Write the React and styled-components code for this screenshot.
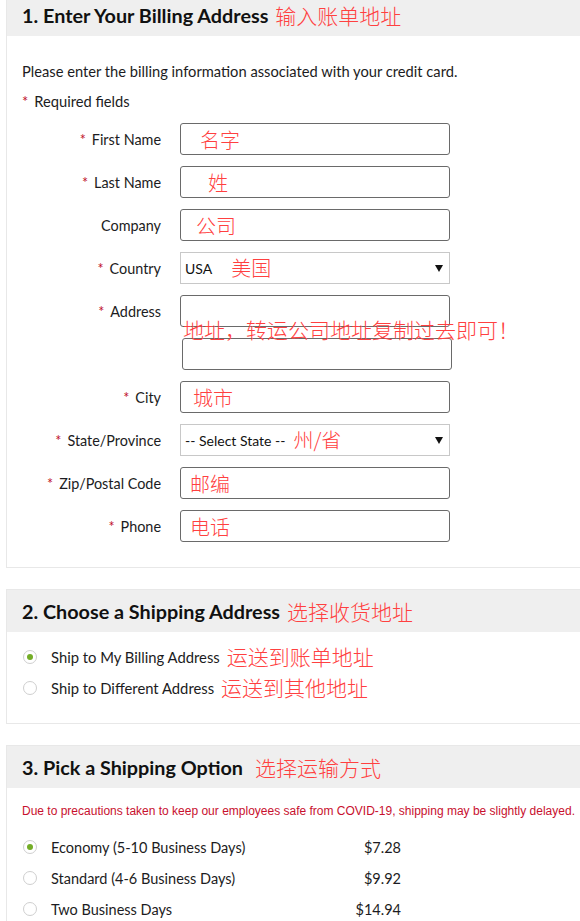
import React from 'react';
import styled, { createGlobalStyle } from 'styled-components';

const GlobalStyle = createGlobalStyle`
  html, body {
    margin: 0;
    background: #fff;
    overflow: hidden;
  }
  body {
    font-family: Lato, "Noto Sans", sans-serif;
    color: #1c1c22;
  }
`;

const Page = styled.div`
  padding-left: 6px;
  width: 600px;
`;

const Section = styled.section`
  border: 1px solid #e8e8e8;
  margin-top: ${(p) => (p.$first ? '-7px' : '0')};
  margin-bottom: 21px;
`;

const SectionHeader = styled.div`
  height: 42px;
  background: #efefef;
  display: flex;
  align-items: center;
  padding-left: 15px;
  gap: ${(p) => p.$gap || 7}px;
`;

const Title = styled.h2`
  margin: 0;
  font-size: 19.8px;
  font-weight: 700;
  color: #111;
`;

// 빨간 중국어 메모
const Note = styled.span`
  font-family: "Noto Sans CJK SC", sans-serif;
  font-size: ${(p) => p.$size || 21}px;
  font-weight: 300;
  color: #ff4040;
  margin-left: ${(p) => p.$left || 0}px;
  white-space: nowrap;
  line-height: 1;
`;

const Body = styled.div`
  padding: ${(p) => p.$pad};
`;

const Intro = styled.p`
  margin: 0 0 10px;
  font-size: 14.7px;
  line-height: 20px;
`;

const Required = styled.p`
  margin: 0 0 12px;
  font-size: 14.7px;
  line-height: 20px;
`;

const Star = styled.span`
  color: #c0102a;
  margin-right: 6px;
`;

const Form = styled.div`
  display: grid;
  grid-template-columns: 139px 270px;
  column-gap: 19px;
  row-gap: 11px;
`;

const Label = styled.label`
  height: 32px;
  display: flex;
  align-items: center;
  justify-content: flex-end;
  font-size: 14.4px;
`;

const FieldCell = styled.div`
  position: relative;
  margin-left: ${(p) => p.$shift || 0}px;
`;

const TextInput = styled.input`
  box-sizing: border-box;
  width: 270px;
  height: 32px;
  border: 1px solid #6a6a6a;
  border-radius: 3px;
  outline: none;
  padding: 0 0 0 ${(p) => p.$indent || 8}px;
  font-family: "Noto Sans CJK SC", sans-serif;
  font-size: 20px;
  font-weight: 300;
  color: #ff4040;
  background: #fff;
`;

const SelectBox = styled.div`
  box-sizing: border-box;
  width: 270px;
  height: 32px;
  border: 1px solid #c8c8c8;
  display: flex;
  align-items: center;
  padding: 0 6px 0 4px;
  font-size: 14px;
  color: #111;
`;

const Arrow = styled.span`
  margin-left: auto;
  width: 0;
  height: 0;
  border-left: 4px solid transparent;
  border-right: 4px solid transparent;
  border-top: 7px solid #111;
`;

const Overlay = styled.span`
  position: absolute;
  left: 3px;
  top: 24px;
  z-index: 2;
`;

const RadioList = styled.div`
  display: flex;
  flex-direction: column;
  gap: 11px;
`;

const RadioRow = styled.div`
  display: grid;
  grid-template-columns: 14px auto;
  justify-content: start;
  align-items: center;
  column-gap: 14px;
  height: 20px;
  padding-left: 1px;
  font-size: 14.8px;
`;

const OptionRow = styled.div`
  display: grid;
  grid-template-columns: 14px 1fr auto;
  align-items: center;
  column-gap: 14px;
  height: 20px;
  width: 378px;
  padding-left: 1px;
  font-size: 14.5px;
`;

const Radio = styled.span`
  box-sizing: border-box;
  width: 14px;
  height: 14px;
  border-radius: 50%;
  border: 1px solid #cfcfcf;
  background: #fff;
  display: flex;
  align-items: center;
  justify-content: center;
  &::after {
    content: '';
    width: 6px;
    height: 6px;
    border-radius: 50%;
    background: ${(p) => (p.$checked ? '#74ad27' : 'transparent')};
  }
`;

const RadioText = styled.span`
  display: flex;
  align-items: center;
  gap: 7px;
`;

const Warning = styled.p`
  margin: 0 0 18px;
  font-family: "Liberation Sans", Arial, sans-serif;
  font-size: 12px;
  line-height: 16px;
  color: #c8102e;
  white-space: nowrap;
`;

const Price = styled.span`
  text-align: right;
`;

const fields = [
  { label: 'First Name', req: true, note: '名字', indent: 19 },
  { label: 'Last Name', req: true, note: '姓', indent: 27 },
  { label: 'Company', note: '公司', indent: 15 },
  { label: 'Country', req: true, select: 'USA', note: '美国', gap: 19 },
  { label: 'Address', req: true, note: '', address: true },
  { label: '', note: '', shift: 2 },
  { label: 'City', req: true, note: '城市', indent: 12 },
  { label: 'State/Province', req: true, select: '-- Select State --', note: '州/省', gap: 8 },
  { label: 'Zip/Postal Code', req: true, note: '邮编', indent: 9 },
  { label: 'Phone', req: true, note: '电话', indent: 9 },
];

const shippingOptions = [
  { name: 'Economy (5-10 Business Days)', price: '$7.28', checked: true },
  { name: 'Standard (4-6 Business Days)', price: '$9.92' },
  { name: 'Two Business Days', price: '$14.94' },
];

const FieldRow = ({ field }) => (
  <>
    <Label>
      {field.req && <Star>*</Star>}
      {field.label}
    </Label>
    <FieldCell $shift={field.shift}>
      {field.select ? (
        <SelectBox>
          <span>{field.select}</span>
          <Note $left={field.gap} $size={20}>{field.note}</Note>
          <Arrow />
        </SelectBox>
      ) : (
        <TextInput $indent={field.indent} defaultValue={field.note} />
      )}
      {field.address && (
        <Overlay>
          <Note $size={21}>地址，转运公司地址复制过去即可！</Note>
        </Overlay>
      )}
    </FieldCell>
  </>
);

const App = () => {
  return (
    <Page>
      <GlobalStyle />
      <Section $first>
        <SectionHeader>
          <Title>1. Enter Your Billing Address</Title>
          <Note>输入账单地址</Note>
        </SectionHeader>
        <Body $pad="25px 15px 25px">
          <Intro>Please enter the billing information associated with your credit card.</Intro>
          <Required>
            <Star>*</Star>Required fields
          </Required>
          <Form>
            {fields.map((f, i) => (
              <FieldRow key={i} field={f} />
            ))}
          </Form>
        </Body>
      </Section>

      <Section>
        <SectionHeader>
          <Title>2. Choose a Shipping Address</Title>
          <Note>选择收货地址</Note>
        </SectionHeader>
        <Body $pad="14px 15px 26px">
          <RadioList>
            <RadioRow>
              <Radio $checked />
              <RadioText>
                Ship to My Billing Address <Note>运送到账单地址</Note>
              </RadioText>
            </RadioRow>
            <RadioRow>
              <Radio />
              <RadioText>
                Ship to Different Address <Note>运送到其他地址</Note>
              </RadioText>
            </RadioRow>
          </RadioList>
        </Body>
      </Section>

      <Section>
        <SectionHeader $gap={12}>
          <Title>3. Pick a Shipping Option</Title>
          <Note>选择运输方式</Note>
        </SectionHeader>
        <Body $pad="15px 15px 20px">
          <Warning>
            Due to precautions taken to keep our employees safe from COVID-19, shipping may be slightly delayed.
          </Warning>
          <RadioList>
            {shippingOptions.map((o) => (
              <OptionRow key={o.name}>
                <Radio $checked={o.checked} />
                <span>{o.name}</span>
                <Price>{o.price}</Price>
              </OptionRow>
            ))}
          </RadioList>
        </Body>
      </Section>
    </Page>
  );
};

export default App;
